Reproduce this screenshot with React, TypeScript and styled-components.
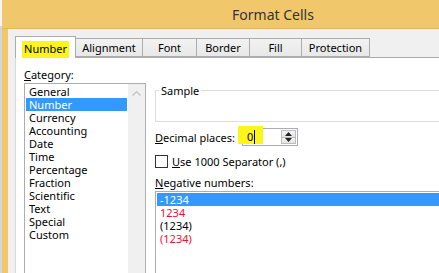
import styled, { createGlobalStyle } from 'styled-components';

const GlobalStyle = createGlobalStyle`
  html, body {
    margin: 0;
    padding: 0;
    background: #ffffff;
  }
  body {
    font-family: "Noto Sans", "Liberation Sans", sans-serif;
    font-size: 11px;
    color: #000;
  }
`;

const tabs = [
  { label: 'Number', width: 61 },
  { label: 'Alignment', width: 68 },
  { label: 'Font', width: 55 },
  { label: 'Border', width: 54 },
  { label: 'Fill', width: 53 },
  { label: 'Protection', width: 69 },
];

const categories = [
  'General',
  'Number',
  'Currency',
  'Accounting',
  'Date',
  'Time',
  'Percentage',
  'Fraction',
  'Scientific',
  'Text',
  'Special',
  'Custom',
];

const negatives = [
  { text: '-1234', red: false },
  { text: '1234', red: true },
  { text: '(1234)', red: false },
  { text: '(1234)', red: true },
];

const Screen = styled.div`
  width: 439px;
  height: 273px;
  overflow: hidden;
  display: flex;
  align-items: flex-start;
`;

const ExcelEdge = styled.div`
  flex: 0 0 2px;
  height: 273px;
  background: linear-gradient(#f4f4f4 0, #f4f4f4 26px, #d6d6d6 26px);
`;

const Window = styled.div`
  flex: 0 0 536px;
  display: flex;
  flex-direction: column;
  background: #f1c76b;
  padding-left: 6px;
`;

const TitleBar = styled.div`
  flex: 0 0 29px;
  margin-left: -6px;
  display: flex;
  align-items: center;
  justify-content: center;
  font-size: 14px;
  color: #333333;
  border-bottom: 1px solid #e2b659;
  box-sizing: border-box;
`;

const Body = styled.div`
  background: #f0f0f0;
  padding: 7px 0 0 7px;
  display: flex;
  flex-direction: column;
`;

const TabRow = styled.div`
  flex: 0 0 21px;
  display: flex;
  align-items: flex-end;
  position: relative;
  z-index: 1;
`;

const Tab = styled.div<{ $active?: boolean; $width: number }>`
  box-sizing: border-box;
  width: ${(p) => p.$width}px;
  height: ${(p) => (p.$active ? 22 : 19)}px;
  margin-bottom: ${(p) => (p.$active ? -1 : 0)}px;
  margin-left: -1px;
  border: 1px solid #acacac;
  border-bottom: ${(p) => (p.$active ? 'none' : '1px solid #acacac')};
  background: ${(p) => (p.$active ? '#ffffff' : 'linear-gradient(#f2f2f2, #e8e8e8)')};
  display: flex;
  justify-content: center;
  align-items: ${(p) => (p.$active ? 'flex-start' : 'center')};
  padding-top: ${(p) => (p.$active ? 4 : 0)}px;
  line-height: 15px;

  &:first-child {
    margin-left: 0;
  }
`;

const Marker = styled.span`
  display: inline-block;
  background: #fbf51c;
  padding: 1px 2px 3px;
  line-height: 13px;
`;

const Panel = styled.div`
  background: #ffffff;
  border-top: 1px solid #acacac;
  border-left: 1px solid #d9d9d9;
  display: flex;
  gap: 9px;
`;

const LeftColumn = styled.div`
  padding: 9px 0 0 8px;
  display: flex;
  flex-direction: column;
`;

const RightColumn = styled.div`
  flex: 1;
  padding-top: 25px;
  display: flex;
  flex-direction: column;
`;

const FieldLabel = styled.div`
  line-height: 15px;
  white-space: nowrap;
`;

const ListBox = styled.div<{ $width?: number }>`
  box-sizing: border-box;
  flex: 0 0 auto;
  width: ${(p) => (p.$width ? `${p.$width}px` : 'auto')};
  height: ${(p) => (p.$width ? 200 : 110)}px;
  margin-top: 1px;
  border: 1px solid #abadb3;
  display: flex;
`;

const Rows = styled.div`
  flex: 1;
  padding: 1px;
  display: flex;
  flex-direction: column;
`;

const Row = styled.div<{ $selected?: boolean; $red?: boolean }>`
  flex: 0 0 13px;
  line-height: 13px;
  padding-left: 3px;
  white-space: nowrap;
  background: ${(p) => (p.$selected ? '#3399ff' : 'transparent')};
  color: ${(p) => (p.$selected ? '#ffffff' : p.$red ? '#f0102e' : '#000000')};
`;

const ScrollTrack = styled.div`
  flex: 0 0 17px;
  background: #f0f0f0;
  display: flex;
  justify-content: center;
  padding-top: 7px;
  box-sizing: border-box;
`;

const SampleBox = styled.fieldset`
  margin: 0;
  padding: 0 0 0 3px;
  height: 39px;
  box-sizing: border-box;
  border: 1px solid #dcdcdc;
  legend {
    padding: 0 2px;
    line-height: 15px;
  }
`;

const DecimalRow = styled.div`
  margin-top: 6px;
  display: flex;
  align-items: center;
`;

const DecimalLabel = styled.div`
  width: 87px;
  line-height: 15px;
`;

const SpinWrap = styled.div`
  position: relative;
`;

const SpinHighlight = styled.div`
  position: absolute;
  left: -5px;
  top: -3px;
  width: 25px;
  height: 18px;
  background: #fbf51c;
`;

const SpinInput = styled.div`
  box-sizing: border-box;
  width: 56px;
  height: 18px;
  border: 1px solid #abadb3;
  display: flex;
  align-items: center;
  justify-content: space-between;
  padding-left: 4px;
  position: relative;
`;

const SpinValue = styled.span`
  position: relative;
  line-height: 14px;
  border-right: 1px solid #000;
  padding-right: 1px;
`;

const SpinButtons = styled.div`
  width: 15px;
  height: 14px;
  margin-right: 1px;
  display: flex;
  flex-direction: column;
`;

const SpinButton = styled.div`
  flex: 1;
  box-sizing: border-box;
  border: 1px solid #bcbcbc;
  background: linear-gradient(#f6f6f6, #e4e4e4);
  display: flex;
  align-items: center;
  justify-content: center;
  & + & {
    border-top: none;
  }
`;

const CheckRow = styled.div`
  margin-top: 8px;
  display: flex;
  align-items: center;
  gap: 4px;
`;

const CheckBox = styled.div`
  box-sizing: border-box;
  width: 13px;
  height: 13px;
  border: 1px solid #333333;
  background: #ffffff;
`;

const NegLabel = styled(FieldLabel)`
  margin-top: 6px;
`;

const Chevron = () => (
  <svg width="9" height="5" viewBox="0 0 9 5">
    <path d="M0.5 4.5 L4.5 0.8 L8.5 4.5" fill="none" stroke="#c2c2c2" strokeWidth="1.4" />
  </svg>
);

const Arrow = ({ up }: { up?: boolean }) => (
  <svg width="7" height="4" viewBox="0 0 7 4">
    <path d={up ? 'M0 4 L3.5 0 L7 4 Z' : 'M0 0 L3.5 4 L7 0 Z'} fill="#222" />
  </svg>
);

export default function App() {
  return (
    <>
      <GlobalStyle />
      <Screen>
        <ExcelEdge />
        <Window>
          <TitleBar>Format Cells</TitleBar>
          <Body>
            <TabRow>
              {tabs.map((t, i) => (
                <Tab key={t.label} $width={t.width} $active={i === 0}>
                  {i === 0 ? <Marker>{t.label}</Marker> : t.label}
                </Tab>
              ))}
            </TabRow>
            <Panel>
              <LeftColumn>
                <FieldLabel>
                  <u>C</u>ategory:
                </FieldLabel>
                <ListBox $width={122}>
                  <Rows>
                    {categories.map((c) => (
                      <Row key={c} $selected={c === 'Number'}>
                        {c}
                      </Row>
                    ))}
                  </Rows>
                  <ScrollTrack>
                    <Chevron />
                  </ScrollTrack>
                </ListBox>
              </LeftColumn>
              <RightColumn>
                <SampleBox>
                  <legend>Sample</legend>
                </SampleBox>
                <DecimalRow>
                  <DecimalLabel>
                    <u>D</u>ecimal places:
                  </DecimalLabel>
                  <SpinWrap>
                    <SpinInput>
                      <SpinHighlight />
                      <SpinValue>0</SpinValue>
                      <SpinButtons>
                        <SpinButton>
                          <Arrow up />
                        </SpinButton>
                        <SpinButton>
                          <Arrow />
                        </SpinButton>
                      </SpinButtons>
                    </SpinInput>
                  </SpinWrap>
                </DecimalRow>
                <CheckRow>
                  <CheckBox />
                  <FieldLabel>
                    <u>U</u>se 1000 Separator (,)
                  </FieldLabel>
                </CheckRow>
                <NegLabel>
                  <u>N</u>egative numbers:
                </NegLabel>
                <ListBox>
                  <Rows>
                    {negatives.map((n, i) => (
                      <Row key={i} $selected={i === 0} $red={n.red}>
                        {n.text}
                      </Row>
                    ))}
                  </Rows>
                </ListBox>
              </RightColumn>
            </Panel>
          </Body>
        </Window>
      </Screen>
    </>
  );
}
